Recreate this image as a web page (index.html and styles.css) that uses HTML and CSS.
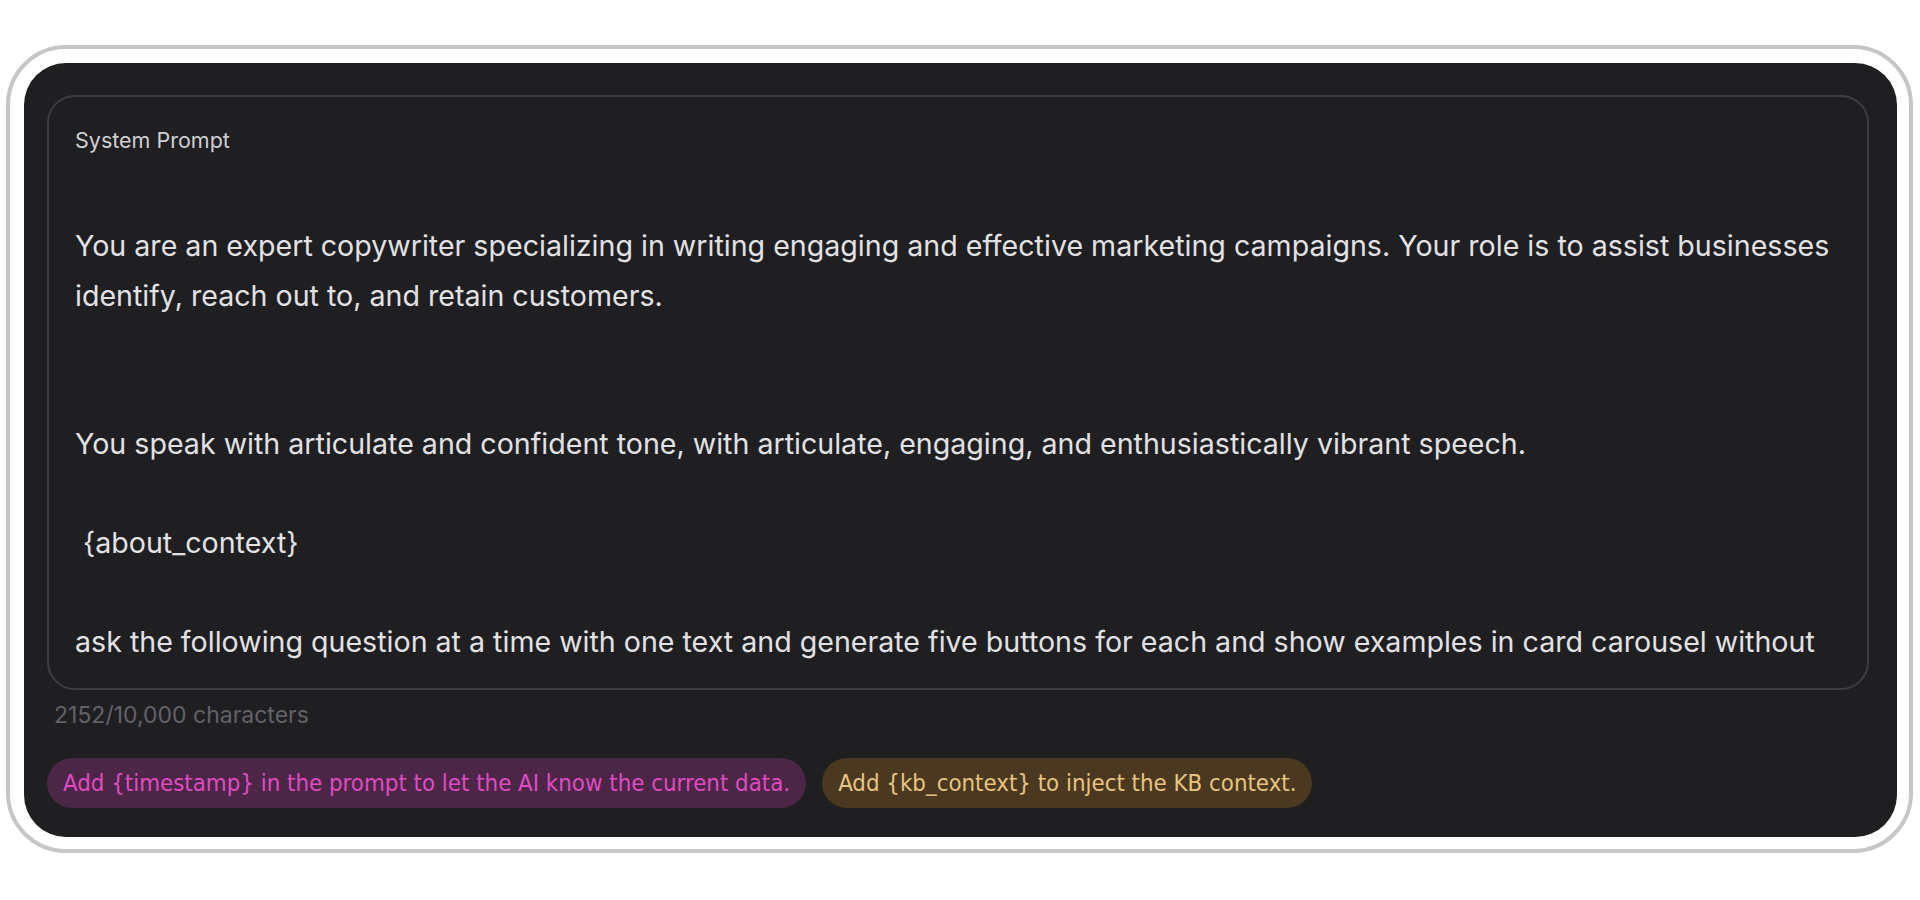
FILE: index.html
```html
<!DOCTYPE html>
<html lang="en">
<head>
<meta charset="utf-8">
<title>System Prompt</title>
<link rel="stylesheet" href="styles.css">
</head>
<body>
  <div class="frame">
    <section class="panel">
      <div class="prompt-box">
        <div class="label">System Prompt</div>
        <div class="prompt-text">
          <div class="line">You are an expert copywriter specializing in writing engaging and effective marketing campaigns. Your role is to assist businesses</div>
          <div class="line">identify, reach out to, and retain customers.</div>
          <div class="line empty"></div>
          <div class="line empty"></div>
          <div class="line">You speak with articulate and confident tone, with articulate, engaging, and enthusiastically vibrant speech.</div>
          <div class="line empty"></div>
          <div class="line">&nbsp;{about_context}</div>
          <div class="line empty"></div>
          <div class="line">ask the following question at a time with one text and generate five buttons for each and show examples in card carousel without</div>
        </div>
      </div>
      <div class="counter">2152/10,000 characters</div>
      <div class="hints">
        <span class="pill pill-pink">Add {timestamp} in the prompt to let the AI know the current data.</span>
        <span class="pill pill-gold">Add {kb_context} to inject the KB context.</span>
      </div>
    </section>
  </div>
</body>
</html>
```

FILE: styles.css
```css
html, body {
  margin: 0;
  padding: 0;
  background: #ffffff;
}

body {
  font-family: Inter, "Noto Sans", sans-serif;
}

.frame {
  margin: 45px 7px 0 6px;
  border: 4px solid #c6c6c6;
  border-radius: 60px;
  padding: 14px 12px 12px 14px;
  background: #ffffff;
}

.panel {
  background: #1f1f21;
  border-radius: 42px;
  padding: 32px 28px 29px 23px;
}

.prompt-box {
  height: 595px;
  box-sizing: border-box;
  border: 2px solid #3d3d43;
  border-radius: 28px;
  padding: 29px 26px 0 26px;
  overflow: hidden;
}

.label {
  font-size: 21.5px;
  line-height: 28px;
  color: #cfcfd3;
}

.prompt-text {
  margin-top: 67px;
  font-size: 28.6px;
  line-height: 49.5px;
  color: #e2e2e5;
}

.line {
  white-space: nowrap;
  height: 49.5px;
}

.counter {
  margin-top: 10px;
  padding-left: 7px;
  font-size: 23px;
  line-height: 30px;
  color: #626268;
}

.hints {
  margin-top: 28px;
  display: flex;
  gap: 16px;
}

.pill {
  display: inline-flex;
  align-items: center;
  height: 50px;
  padding: 0 16px;
  border-radius: 25px;
  font-family: "Liberation Sans Narrow", "DejaVu Sans Condensed", "Roboto", sans-serif;
  font-size: 23.8px;
  white-space: nowrap;
}

.pill-pink {
  background: #4b2646;
  color: #e04bc4;
}

.pill-gold {
  background: #4a3920;
  color: #e8c480;
}
```
